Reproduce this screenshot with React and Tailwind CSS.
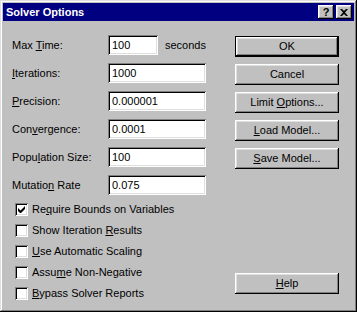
const raised =
  "shadow-[inset_-1px_-1px_0_#000,inset_1px_1px_0_#fff,inset_-2px_-2px_0_#808080,inset_2px_2px_0_#dfdfdf]";
const sunken =
  "shadow-[inset_1px_1px_0_#808080,inset_-1px_-1px_0_#fff,inset_2px_2px_0_#000,inset_-2px_-2px_0_#dfdfdf]";

const fields = [
  { label: <>Max <u>T</u>ime:</>, value: "100", short: true },
  { label: <><u>I</u>terations:</>, value: "1000" },
  { label: <><u>P</u>recision:</>, value: "0.000001" },
  { label: <>Con<u>v</u>ergence:</>, value: "0.0001" },
  { label: <>Popu<u>l</u>ation Size:</>, value: "100" },
  { label: <>Mutatio<u>n</u> Rate</>, value: "0.075" },
];

const checks = [
  { label: <>Re<u>q</u>uire Bounds on Variables</>, on: true },
  { label: <>Show Iteration <u>R</u>esults</> },
  { label: <><u>U</u>se Automatic Scaling</> },
  { label: <>Assu<u>m</u>e Non-Negative</> },
  { label: <><u>B</u>ypass Solver Reports</> },
];

const Button = ({ children, isDefault }) => (
  <div className={`h-[21px] w-[104px] ${isDefault ? "border border-black" : ""}`}>
    <div className={`flex h-full w-full items-center justify-center bg-[#c0c0c0] ${raised}`}>
      <span>{children}</span>
    </div>
  </div>
);

const App = () => {
  return (
    <div
      className="flex h-[312px] w-[357px] flex-col bg-[#c0c0c0] p-[3px] text-[11px] text-black shadow-[inset_-1px_-1px_0_#000,inset_1px_1px_0_#dfdfdf,inset_-2px_-2px_0_#808080,inset_2px_2px_0_#fff]"
      style={{ fontFamily: '"Liberation Sans", Arial, sans-serif' }}
    >
      {/* Title bar */}
      <div className="flex h-[18px] items-center bg-[#000080] pl-[3px] pr-[2px]">
        <span className="flex-1 text-[11px] font-bold text-white">Solver Options</span>
        <div className="flex gap-[2px]">
          <div className={`flex h-[14px] w-[16px] items-center justify-center bg-[#c0c0c0] text-[11px] font-bold leading-none ${raised}`}>
            ?
          </div>
          <div className={`flex h-[14px] w-[16px] items-center justify-center bg-[#c0c0c0] ${raised}`}>
            <svg width="8" height="7" viewBox="0 0 8 7">
              <path d="M0 0h2l2 2 2-2h2L5 3.5 8 7H6L4 5 2 7H0l3-3.5z" fill="#000" />
            </svg>
          </div>
        </div>
      </div>

      {/* Body */}
      <div className="flex flex-1">
        <div className="flex w-[232px] flex-col pl-[9px] pt-[14px]">
          <div className="flex flex-col gap-[8px]">
            {fields.map((f, i) => (
              <div key={i} className="flex h-[20px] items-center">
                <div className="w-[96px]">{f.label}</div>
                <div className={`flex h-[20px] items-center bg-white px-[4px] ${sunken} ${f.short ? "w-[50px]" : "w-[98px]"}`}>
                  {f.value}
                </div>
                {f.short && <span className="ml-[7px]">seconds</span>}
              </div>
            ))}
          </div>
          <div className="mt-[4px] flex flex-col pl-[3px]">
            {checks.map((c, i) => (
              <div key={i} className="flex h-[21px] items-center gap-[4px]">
                <div className={`flex h-[13px] w-[13px] items-center justify-center bg-white ${sunken}`}>
                  {c.on && (
                    <svg width="7" height="7" viewBox="0 0 7 7">
                      <path d="M0 2v3l2 2h1l4-4V0L2.5 4.5z" fill="#000" />
                    </svg>
                  )}
                </div>
                <span>{c.label}</span>
              </div>
            ))}
          </div>
        </div>

        <div className="flex flex-col gap-[7px] pt-[15px]">
          <Button isDefault>OK</Button>
          <Button>Cancel</Button>
          <Button>Limit <u>O</u>ptions...</Button>
          <Button><u>L</u>oad Model...</Button>
          <Button><u>S</u>ave Model...</Button>
          <div className="mt-[97px]">
            <Button><u>H</u>elp</Button>
          </div>
        </div>
      </div>
    </div>
  );
};

export default App;
